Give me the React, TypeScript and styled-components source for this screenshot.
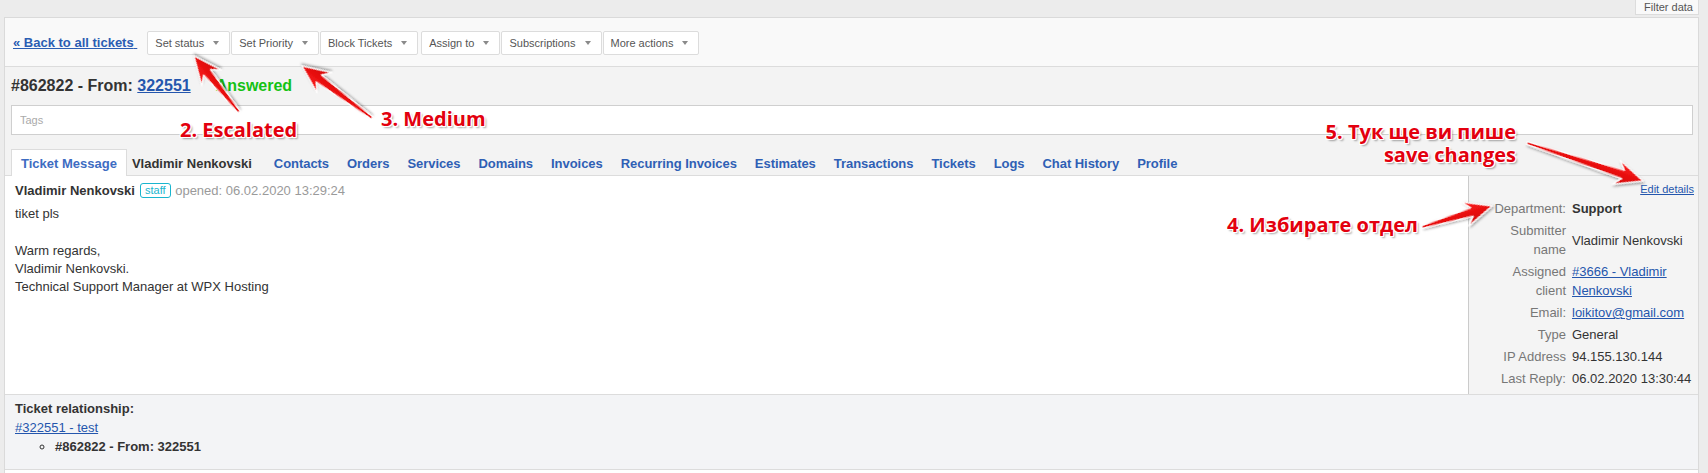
import React from "react";
import styled, { createGlobalStyle } from "styled-components";

const GlobalStyle = createGlobalStyle`
  html, body { margin: 0; padding: 0; }
  body {
    background: #ececec;
    font-family: "Liberation Sans", Arial, sans-serif;
    font-size: 13px;
    color: #333;
  }
  * { box-sizing: border-box; }
`;

const FONT = `"Liberation Sans", Arial, sans-serif`;

const Page = styled.div`
  position: relative;
  width: 1708px;
  height: 473px;
  overflow: hidden;
  padding: 0 9px 0 4px;
  background: #ececec;
`;

const TopBand = styled.div`
  display: flex;
  justify-content: flex-end;
  height: 17px;
`;

const FilterButton = styled.button`
  height: 15px;
  padding: 0 5px 0 8px;
  border: 1px solid #dcdcdc;
  border-top: none;
  background: #f9f9f9;
  font: 11px/13px ${FONT};
  color: #555;
`;

const Panel = styled.div`
  border: 1px solid #dadada;
  background: #f3f3f3;
`;

const Toolbar = styled.div`
  display: flex;
  align-items: center;
  padding: 13px 0 11px 8px;
  background: #f9f9f9;
  border-bottom: 1px solid #dcdcdc;
`;

const BackLink = styled.a`
  font: bold 13px/16px ${FONT};
  color: #2b5db3;
  text-decoration: underline;
  margin-right: 10px;
  white-space: nowrap;
`;

const ButtonGroup = styled.div`
  display: flex;
  gap: 1px;
  & + & {
    margin-left: 3px;
  }
`;

const DropButton = styled.button`
  display: inline-flex;
  align-items: center;
  gap: 9px;
  height: 24px;
  padding: 0 10px 0 7px;
  border: 1px solid #dcdcdc;
  border-radius: 2px;
  background: #fff;
  font: 11px/13px ${FONT};
  color: #555;
  white-space: nowrap;
`;

const Caret = styled.span`
  width: 0;
  height: 0;
  border-left: 3.5px solid transparent;
  border-right: 3.5px solid transparent;
  border-top: 4px solid #8a8a8a;
`;

const Header = styled.div`
  padding: 9px 5px 14px 6px;
`;

const Title = styled.h1`
  margin: 0;
  font: bold 16px/20px ${FONT};
  color: #333;
  white-space: nowrap;
`;

const TitleLink = styled.a`
  color: #2456ad;
  text-decoration: underline;
`;

const Status = styled.span`
  color: #14c214;
  margin-left: 25px;
`;

const TagsInput = styled.input`
  display: block;
  width: 100%;
  height: 30px;
  margin-top: 9px;
  padding: 0 8px;
  border: 1px solid #cfcfcf;
  background: #fff;
  font: 11px ${FONT};
  color: #333;
  &::placeholder {
    color: #aaa;
  }
`;

const TabBar = styled.div`
  display: flex;
  align-items: flex-end;
  padding-left: 6px;
  border-bottom: 1px solid #dcdcdc;
`;

const Tab = styled.a<{ $active?: boolean; $plain?: boolean }>`
  display: block;
  margin-bottom: -1px;
  padding: ${(p) => (p.$active ? "6px 9px 4px" : p.$plain ? "6px 12px 4px 4px" : "6px 8px 4px")};
  border: 1px solid ${(p) => (p.$active ? "#dcdcdc" : "transparent")};
  border-bottom: none;
  background: ${(p) => (p.$active ? "#fff" : "transparent")};
  font: bold 13px/16px ${FONT};
  letter-spacing: ${(p) => (p.$active || p.$plain ? "0" : "-0.05px")};
  color: ${(p) => (p.$active ? "#3d6cc2" : p.$plain ? "#333" : "#2f5fb5")};
  white-space: nowrap;
  text-decoration: none;
`;

const ContentRow = styled.div`
  display: flex;
  background: #fff;
`;

const MessagePane = styled.div`
  flex: 1;
  padding: 6px 10px;
  font: 13px/18px ${FONT};
  color: #333;
`;

const Author = styled.b`
  font-weight: bold;
`;

const Badge = styled.span`
  display: inline-block;
  vertical-align: middle;
  margin: -2px 1px 0 5px;
  padding: 0 4px;
  border: 1px solid #19b5ce;
  border-radius: 3px;
  font: 11px/13px ${FONT};
  color: #19b5ce;
  background: #fff;
`;

const Meta = styled.span`
  color: #9a9a9a;
`;

const Body = styled.div<{ $gap: number }>`
  margin-top: ${(p) => p.$gap}px;
`;

const Sidebar = styled.div`
  flex: 0 0 230px;
  padding: 6px 4px 4px 0;
  border-left: 1px solid #cbcbcb;
  background: #f4f4f4;
`;

const EditLink = styled.a`
  display: block;
  text-align: right;
  font: 11px/14px ${FONT};
  color: #2456ad;
  text-decoration: underline;
  margin-bottom: 2px;
`;

const DetailsGrid = styled.div`
  display: grid;
  grid-template-columns: 72px 122px;
  column-gap: 6px;
  justify-content: end;
  align-items: center;
  font: 13px/19px ${FONT};
`;

const Label = styled.div`
  padding: 1px 0 2px;
  text-align: right;
  color: #777;
`;

const Value = styled.div<{ $bold?: boolean }>`
  padding: 1px 0 2px;
  color: #333;
  font-weight: ${(p) => (p.$bold ? "bold" : "normal")};
`;

const ValueLink = styled.a`
  color: #2456ad;
  text-decoration: underline;
`;

const Relationship = styled.div`
  padding: 4px 10px 13px;
  border-top: 1px solid #dcdcdc;
  border-bottom: 1px solid #dcdcdc;
  background: #f3f4f6;
  font: 13px/19px ${FONT};
  color: #333;
`;

const RelTitle = styled.div`
  font-weight: bold;
`;

const RelLink = styled.a`
  color: #2456ad;
  text-decoration: underline;
`;

const RelList = styled.ul`
  margin: 0;
  padding-left: 40px;
  list-style: circle;
  font-weight: bold;
`;

const Footer = styled.div`
  height: 20px;
  background: #fff;
`;

const Overlay = styled.svg`
  position: absolute;
  left: 0;
  top: 0;
  width: 1708px;
  height: 473px;
  pointer-events: none;
`;

const Callout = styled.div<{ $left?: number; $right?: number; $top: number }>`
  position: absolute;
  top: ${(p) => p.$top}px;
  ${(p) => (p.$left !== undefined ? `left: ${p.$left}px;` : "")}
  ${(p) => (p.$right !== undefined ? `right: ${p.$right}px; text-align: right;` : "")}
  font-family: "Open Sans", sans-serif;
  font-weight: 700;
  font-size: 20px;
  line-height: 23px;
  color: #e3000e;
  white-space: nowrap;
  text-shadow: -1px -1px 0 #fff, 1px -1px 0 #fff, -1px 1px 0 #fff, 1px 1px 0 #fff,
    0 -1px 0 #fff, 0 1px 0 #fff, -1px 0 0 #fff, 1px 0 0 #fff,
    2px 2px 2px rgba(0, 0, 0, 0.35);
`;

function Arrow({ x1, y1, x2, y2 }: { x1: number; y1: number; x2: number; y2: number }) {
  const dx = x2 - x1;
  const dy = y2 - y1;
  const L = Math.sqrt(dx * dx + dy * dy);
  const deg = (Math.atan2(dy, dx) * 180) / Math.PI;
  const pts = [
    [0, -1.4],
    [L - 21, -4.4],
    [L - 28, -12.5],
    [L, 0],
    [L - 28, 12.5],
    [L - 21, 4.4],
    [0, 1.4],
  ]
    .map((p) => p.join(","))
    .join(" ");
  return (
    <g transform={`translate(${x1} ${y1}) rotate(${deg})`}>
      <polygon
        points={pts}
        fill="url(#arrowFill)"
        stroke="#fff"
        strokeWidth={1.3}
        strokeLinejoin="round"
        filter="url(#arrowShadow)"
      />
    </g>
  );
}

const toolbarGroups = [
  ["Set status", "Set Priority", "Block Tickets"],
  ["Assign to", "Subscriptions", "More actions"],
];

const tabs = [
  "Contacts",
  "Orders",
  "Services",
  "Domains",
  "Invoices",
  "Recurring Invoices",
  "Estimates",
  "Transactions",
  "Tickets",
  "Logs",
  "Chat History",
  "Profile",
];

export default function App() {
  return (
    <>
      <GlobalStyle />
      <Page>
        <TopBand>
          <FilterButton>Filter data</FilterButton>
        </TopBand>
        <Panel>
          <Toolbar>
            <BackLink href="#">« Back to all tickets{"\u00a0"}</BackLink>
            {toolbarGroups.map((g, i) => (
              <ButtonGroup key={i}>
                {g.map((b) => (
                  <DropButton key={b}>
                    {b}
                    <Caret />
                  </DropButton>
                ))}
              </ButtonGroup>
            ))}
          </Toolbar>
          <Header>
            <Title>
              #862822 - From: <TitleLink href="#">322551</TitleLink>
              <Status>Answered</Status>
            </Title>
            <TagsInput placeholder="Tags" />
          </Header>
          <TabBar>
            <Tab $active>Ticket Message</Tab>
            <Tab $plain>Vladimir Nenkovski</Tab>
            {tabs.map((t) => (
              <Tab key={t} href="#">
                {t}
              </Tab>
            ))}
          </TabBar>
          <ContentRow>
            <MessagePane>
              <div>
                <Author>Vladimir Nenkovski</Author>
                <Badge>staff</Badge> <Meta>opened: 06.02.2020 13:29:24</Meta>
              </div>
              <Body $gap={5}>tiket pls</Body>
              <Body $gap={19}>
                Warm regards,
                <br />
                Vladimir Nenkovski.
                <br />
                Technical Support Manager at WPX Hosting
              </Body>
            </MessagePane>
            <Sidebar>
              <EditLink href="#">Edit details</EditLink>
              <DetailsGrid>
                <Label>Department:</Label>
                <Value $bold>Support</Value>
                <Label>Submitter name</Label>
                <Value>Vladimir Nenkovski</Value>
                <Label>Assigned client</Label>
                <Value>
                  <ValueLink href="#">#3666 - Vladimir Nenkovski</ValueLink>
                </Value>
                <Label>Email:</Label>
                <Value>
                  <ValueLink href="#">loikitov@gmail.com</ValueLink>
                </Value>
                <Label>Type</Label>
                <Value>General</Value>
                <Label>IP Address</Label>
                <Value>94.155.130.144</Value>
                <Label>Last Reply:</Label>
                <Value>06.02.2020 13:30:44</Value>
              </DetailsGrid>
            </Sidebar>
          </ContentRow>
          <Relationship>
            <RelTitle>Ticket relationship:</RelTitle>
            <RelLink href="#">#322551 - test</RelLink>
            <RelList>
              <li>#862822 - From: 322551</li>
            </RelList>
          </Relationship>
          <Footer />
        </Panel>

        <Overlay viewBox="0 0 1708 473">
          <defs>
            <linearGradient id="arrowFill" x1="0" y1="0" x2="0" y2="1">
              <stop offset="0" stopColor="#ff1f1f" />
              <stop offset="1" stopColor="#d20000" />
            </linearGradient>
            <filter id="arrowShadow" x="-20%" y="-50%" width="140%" height="200%">
              <feDropShadow dx="1.5" dy="1.5" stdDeviation="1.2" floodColor="#000" floodOpacity="0.35" />
            </filter>
          </defs>
          <Arrow x1={239} y1={112} x2={194} y2={56} />
          <Arrow x1={372} y1={118} x2={302} y2={66} />
          <Arrow x1={1422} y1={227} x2={1492} y2={206} />
          <Arrow x1={1527} y1={143} x2={1643} y2={181} />
        </Overlay>
        <Callout $left={180} $top={118}>2. Escalated</Callout>
        <Callout $left={381} $top={107}>3. Medium</Callout>
        <Callout $left={1227} $top={213}>4. Избирате отдел</Callout>
        <Callout $right={192} $top={120}>
          5. Тук ще ви пише
          <br />
          save changes
        </Callout>
      </Page>
    </>
  );
}
